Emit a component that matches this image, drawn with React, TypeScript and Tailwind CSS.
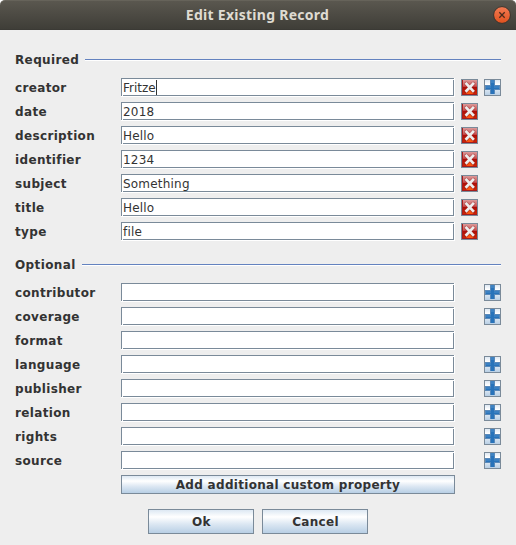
type RowData = { name: string; value?: string; remove?: boolean; add?: boolean; caret?: boolean };

const required: RowData[] = [
  { name: "creator", value: "Fritze", remove: true, add: true, caret: true },
  { name: "date", value: "2018", remove: true },
  { name: "description", value: "Hello", remove: true },
  { name: "identifier", value: "1234", remove: true },
  { name: "subject", value: "Something", remove: true },
  { name: "title", value: "Hello", remove: true },
  { name: "type", value: "file", remove: true },
];

const optional: RowData[] = [
  { name: "contributor", add: true },
  { name: "coverage", add: true },
  { name: "format" },
  { name: "language", add: true },
  { name: "publisher", add: true },
  { name: "relation", add: true },
  { name: "rights", add: true },
  { name: "source", add: true },
];

function RemoveIcon() {
  return (
    <svg width="17" height="17" viewBox="0 0 17 17" className="block">
      <defs>
        <linearGradient id="red" x1="0" y1="0" x2="0" y2="1">
          <stop offset="0" stopColor="#dc9a9a" />
          <stop offset=".45" stopColor="#c85050" />
          <stop offset=".52" stopColor="#ad0e08" />
          <stop offset="1" stopColor="#cf2606" />
        </linearGradient>
      </defs>
      <rect width="17" height="17" fill="#7a8a99" />
      <rect x="1" y="1" width="15" height="15" fill="#a51c1c" />
      <rect x="2" y="1" width="14" height="14" fill="url(#red)" />
      <path d="M5 15 8.500 10.500 12.500 15Z" fill="#fb5510" />
      <path d="M5.200 4.700 12.300 12.300M12.300 4.700 5.200 12.300" stroke="#8d2020" strokeWidth="4.200" strokeLinecap="round" opacity=".35" />
      <path d="M5.500 4.800 12 11.800M12 4.800 5.500 11.800" stroke="#ededed" strokeWidth="2.700" strokeLinecap="square" />
    </svg>
  );
}

function AddIcon() {
  return (
    <svg width="17" height="17" viewBox="0 0 17 17" className="block">
      <defs>
        <linearGradient id="pale" x1="0" y1="0" x2="0" y2="1">
          <stop offset="0" stopColor="#dde8f3" />
          <stop offset=".3" stopColor="#ffffff" />
          <stop offset=".6" stopColor="#dde8f3" />
          <stop offset="1" stopColor="#b8cfe5" />
        </linearGradient>
      </defs>
      <rect width="17" height="17" fill="#7a8a99" />
      <rect x="1" y="1" width="15" height="15" fill="url(#pale)" />
      <path d="M6 1h5v5h5v5h-5v4H6v-4H1V6h5Z" fill="#5a8abb" />
      <path d="M7 2h3v5h5v3h-5v5H7v-5H2V7h5Z" fill="#2873ba" />
      <path d="M2 8h5M10 8h5" stroke="#4f8fca" strokeWidth="1" />
      <path d="M7 1h3v3H7Z" fill="#3f83c2" />
    </svg>
  );
}

function Field({ value, caret }: { value?: string; caret?: boolean }) {
  return (
    <div className="relative h-[19px] w-[334px] border-r border-b border-white">
      <div className="flex h-[18px] items-center border border-[#7a8a99] bg-white pl-px font-normal whitespace-pre">
        <span className={caret ? "pt-px text-[12px] leading-4" : "pt-px text-[12px] leading-4 tracking-[0.2px]"}>{value}</span>
        {caret && <span className="h-[15px] w-px bg-[#333333]" />}
      </div>
      <span className="absolute bottom-0 left-px size-px bg-white" />
      <span className="absolute top-px right-0 size-px bg-white" />
    </div>
  );
}

function Row({ name, value, remove, add, caret }: RowData) {
  return (
    <div className="flex h-6 items-start">
      <label className="w-[106px] pt-px text-[12px] leading-[18px] tracking-[0.35px]">{name}</label>
      <Field value={value} caret={caret} />
      <div className="flex w-[46px] gap-[6px] pt-px pl-[6px]">
        <div className="w-[17px]">{remove && <RemoveIcon />}</div>
        <div className="w-[17px]">{add && <AddIcon />}</div>
      </div>
    </div>
  );
}

function Heading({ children }: { children: string }) {
  return (
    <div className="flex h-4 items-center">
      <span className="mr-[6px] text-[12px] leading-4 tracking-[0.38px]">{children}</span>
      <div className="h-[2px] flex-1 border-t border-b border-t-[#6382bf] border-b-white" />
    </div>
  );
}

const button =
  "flex items-center justify-center border border-[#7a8a99] bg-[linear-gradient(#dde8f3,#ffffff_30%,#dde8f3_60%,#b8cfe5)] text-[12px] font-bold tracking-[0.3px]";

export default function App() {
  return (
    <div className="h-[545px] w-[516px] overflow-hidden bg-white font-['DejaVu_Sans',sans-serif] font-bold text-[#333333]">
      <div className="flex h-full flex-col rounded-t-[5px] bg-[#eeeeee]">
        <header className="flex h-[30px] items-center rounded-t-[5px] border-t border-[#66635a] bg-linear-to-b from-[#5a574f] to-[#3e3d37] pr-[5px] pb-px pl-[22px] shadow-[inset_0_-1px_0_#3b3a35]">
          <h1 className="flex-1 pb-px text-center font-['Noto_Sans',sans-serif] text-[14px] leading-5 font-bold tracking-[0.27px] text-[#dfdbd2]">
            Edit Existing Record
          </h1>
          <svg width="18" height="18" viewBox="0 0 18 18">
            <defs>
              <linearGradient id="close" x1="0" y1="0" x2="0" y2="1">
                <stop offset="0" stopColor="#f37b54" />
                <stop offset="1" stopColor="#e0511e" />
              </linearGradient>
            </defs>
            <circle cx="9" cy="9" r="8.400" fill="url(#close)" stroke="#35342f" />
            <path d="m6.300 6.300 5.400 5.400m0-5.400-5.400 5.400" stroke="#4b2b1c" strokeWidth="1.300" />
          </svg>
        </header>
        <main className="flex flex-col pt-[22px] pl-[15px]">
          <section className="w-[486px]">
            <Heading>Required</Heading>
            <div className="mt-[10px]">{required.map((r) => <Row key={r.name} {...r} />)}</div>
          </section>
          <section className="mt-[11px] w-[486px]">
            <Heading>Optional</Heading>
            <div className="mt-[10px]">{optional.map((r) => <Row key={r.name} {...r} />)}</div>
          </section>
          <button className={`${button} ml-[106px] h-[19px] w-[334px]`}>Add additional custom property</button>
          <div className="mt-[15px] ml-[133px] flex gap-2">
            <button className={`${button} h-[25px] w-[106px] pl-px`}>Ok</button>
            <button className={`${button} h-[25px] w-[106px] pl-px`}>Cancel</button>
          </div>
        </main>
      </div>
    </div>
  );
}
